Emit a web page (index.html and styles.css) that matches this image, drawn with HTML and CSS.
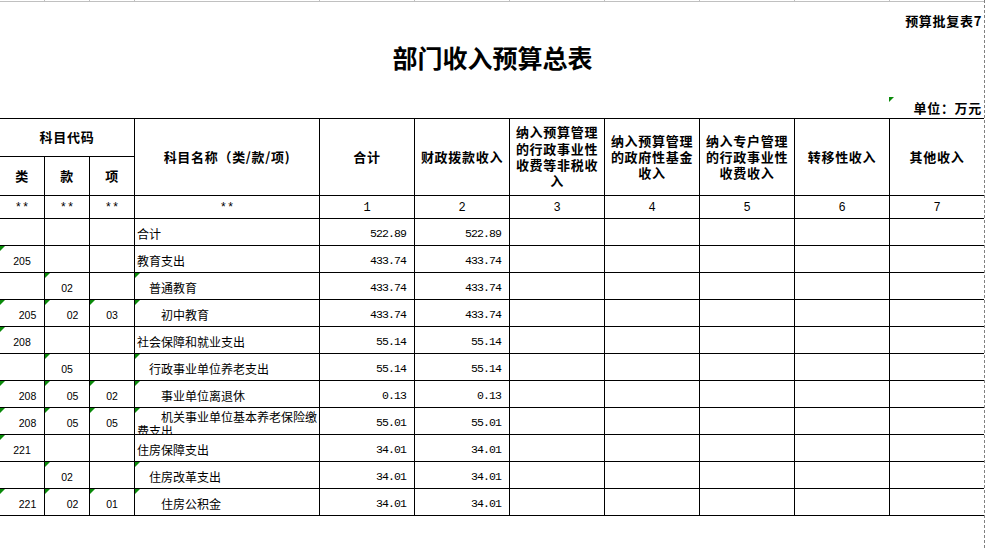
FILE: index.html
```html
<!DOCTYPE html>
<html lang="zh-CN">
<head>
<meta charset="utf-8">
<title>部门收入预算总表</title>
<link rel="stylesheet" href="styles.css">
</head>
<body>
<div class="page">
  <div class="ruler"><span></span><span></span><span></span><span></span><span></span><span></span><span></span><span></span><span></span><span></span><span></span></div>
  <div class="note">预算批复表7</div>
  <h1 class="title">部门收入预算总表</h1>
  <div class="unit-row"><div class="unit mark">单位：万元</div></div>
  <div class="sheet">
    <div class="c h span3">科目代码</div>
    <div class="c h rs2">科目名称（类/款/项)</div>
    <div class="c h rs2">合计</div>
    <div class="c h rs2">财政拨款收入</div>
    <div class="c h rs2">纳入预算管理<br>的行政事业性<br>收费等非税收<br>入</div>
    <div class="c h rs2">纳入预算管理<br>的政府性基金<br>收入</div>
    <div class="c h rs2">纳入专户管理<br>的行政事业性<br>收费收入</div>
    <div class="c h rs2">转移性收入</div>
    <div class="c h rs2">其他收入</div>
    <div class="c h">类</div>
    <div class="c h">款</div>
    <div class="c h">项</div>

    <div class="c idx">**</div><div class="c idx">**</div><div class="c idx">**</div><div class="c idx">**</div>
    <div class="c idx">1</div><div class="c idx">2</div><div class="c idx">3</div><div class="c idx">4</div><div class="c idx">5</div><div class="c idx">6</div><div class="c idx">7</div>

    <div class="c code"></div><div class="c code"></div><div class="c code"></div>
    <div class="c name">合计</div>
    <div class="c num">522.89</div><div class="c num">522.89</div>
    <div class="c"></div><div class="c"></div><div class="c"></div><div class="c"></div><div class="c"></div>

    <div class="c code mark">205</div><div class="c code"></div><div class="c code"></div>
    <div class="c name">教育支出</div>
    <div class="c num">433.74</div><div class="c num">433.74</div>
    <div class="c"></div><div class="c"></div><div class="c"></div><div class="c"></div><div class="c"></div>

    <div class="c code"></div><div class="c code mark">02</div><div class="c code"></div>
    <div class="c name i1 mark">普通教育</div>
    <div class="c num">433.74</div><div class="c num">433.74</div>
    <div class="c"></div><div class="c"></div><div class="c"></div><div class="c"></div><div class="c"></div>

    <div class="c code sh mark">205</div><div class="c code sh mark">02</div><div class="c code mark">03</div>
    <div class="c name i2 mark">初中教育</div>
    <div class="c num">433.74</div><div class="c num">433.74</div>
    <div class="c"></div><div class="c"></div><div class="c"></div><div class="c"></div><div class="c"></div>

    <div class="c code mark">208</div><div class="c code"></div><div class="c code"></div>
    <div class="c name">社会保障和就业支出</div>
    <div class="c num">55.14</div><div class="c num">55.14</div>
    <div class="c"></div><div class="c"></div><div class="c"></div><div class="c"></div><div class="c"></div>

    <div class="c code"></div><div class="c code mark">05</div><div class="c code"></div>
    <div class="c name i1 mark">行政事业单位养老支出</div>
    <div class="c num">55.14</div><div class="c num">55.14</div>
    <div class="c"></div><div class="c"></div><div class="c"></div><div class="c"></div><div class="c"></div>

    <div class="c code sh mark">208</div><div class="c code sh mark">05</div><div class="c code mark">02</div>
    <div class="c name i2 mark">事业单位离退休</div>
    <div class="c num">0.13</div><div class="c num">0.13</div>
    <div class="c"></div><div class="c"></div><div class="c"></div><div class="c"></div><div class="c"></div>

    <div class="c code sh mark">208</div><div class="c code sh mark">05</div><div class="c code mark">05</div>
    <div class="c name i2 wrap mark">机关事业单位基本养老保险缴费支出</div>
    <div class="c num">55.01</div><div class="c num">55.01</div>
    <div class="c"></div><div class="c"></div><div class="c"></div><div class="c"></div><div class="c"></div>

    <div class="c code mark">221</div><div class="c code"></div><div class="c code"></div>
    <div class="c name">住房保障支出</div>
    <div class="c num">34.01</div><div class="c num">34.01</div>
    <div class="c"></div><div class="c"></div><div class="c"></div><div class="c"></div><div class="c"></div>

    <div class="c code"></div><div class="c code mark">02</div><div class="c code"></div>
    <div class="c name i1 mark">住房改革支出</div>
    <div class="c num">34.01</div><div class="c num">34.01</div>
    <div class="c"></div><div class="c"></div><div class="c"></div><div class="c"></div><div class="c"></div>

    <div class="c code sh mark">221</div><div class="c code sh mark">02</div><div class="c code mark">01</div>
    <div class="c name i2 mark">住房公积金</div>
    <div class="c num">34.01</div><div class="c num">34.01</div>
    <div class="c"></div><div class="c"></div><div class="c"></div><div class="c"></div><div class="c"></div>
  </div>
  <div class="pagebreak"></div>
</div>
</body>
</html>
```
FILE: styles.css
```css
html, body {
  margin: 0;
  background: #fff;
}

.page {
  position: relative;
  width: 985px;
  height: 549px;
  font-family: "Noto Sans CJK SC", sans-serif;
  color: #000;
}

.ruler {
  display: grid;
  grid-template-columns: 45px 45px 45px 185px repeat(7, 95px);
  height: 2px;
}

.ruler span {
  box-sizing: border-box;
  border-right: 1px solid #c0c0c0;
  border-bottom: 1px solid #c0c0c0;
}

.note {
  height: 30px;
  box-sizing: border-box;
  padding: 9px 3px 0 0;
  text-align: right;
  font-weight: 700;
  font-size: 13px;
  letter-spacing: 0.7px;
  line-height: 20px;
}

.title {
  margin: 0;
  height: 65px;
  box-sizing: border-box;
  padding-top: 10px;
  font-size: 25px;
  line-height: 31px;
  text-align: center;
  font-weight: 700;
}

.unit-row {
  height: 21px;
  display: flex;
  justify-content: flex-end;
}

.unit {
  position: relative;
  width: 96px;
  box-sizing: border-box;
  padding-right: 3px;
  text-align: right;
  font-weight: 700;
  font-size: 13px;
  letter-spacing: 0.7px;
  line-height: 21px;
}

.sheet {
  display: grid;
  grid-template-columns: 45px 45px 45px 185px repeat(7, 95px);
  grid-template-rows: 38px 39px 23px repeat(11, 27px);
  border-top: 1px solid #000;
}

.c {
  position: relative;
  box-sizing: border-box;
  border-right: 1px solid #000;
  border-bottom: 1px solid #000;
  display: flex;
  align-items: center;
  justify-content: center;
  overflow: hidden;
  font-size: 12px;
  line-height: 14px;
  white-space: normal;
}

.h {
  font-weight: 700;
  font-size: 13px;
  letter-spacing: 0.7px;
  line-height: 16.3px;
  text-align: center;
}

.span3 {
  grid-column: span 3;
}

.rs2 {
  grid-row: span 2;
}

.idx {
  font-family: "Liberation Mono", monospace;
  font-size: 12px;
  padding-top: 1px;
}

.code {
  font-family: "Liberation Sans", Arial, sans-serif;
  font-size: 10.5px;
  padding-top: 3px;
}

.sh {
  padding-left: 11px;
}

.name {
  justify-content: flex-start;
  padding: 3px 0 0 2px;
}

.i1 {
  text-indent: 12px;
}

.i2 {
  text-indent: 24px;
}

.wrap {
  align-items: flex-start;
  padding-top: 2px;
}

.num {
  justify-content: flex-end;
  padding: 3px 8px 0 0;
  font-family: "Liberation Mono", monospace;
  font-size: 11.5px;
  letter-spacing: -0.9px;
}

.mark::before {
  content: "";
  position: absolute;
  left: 0;
  top: 0;
  width: 0;
  height: 0;
  border-top: 5px solid #0a8a0a;
  border-right: 5px solid transparent;
}

.pagebreak {
  position: absolute;
  left: 984px;
  top: 0;
  width: 1px;
  height: 549px;
  background: repeating-linear-gradient(to bottom, #808080 0 3px, #fff 3px 5px);
}
```
